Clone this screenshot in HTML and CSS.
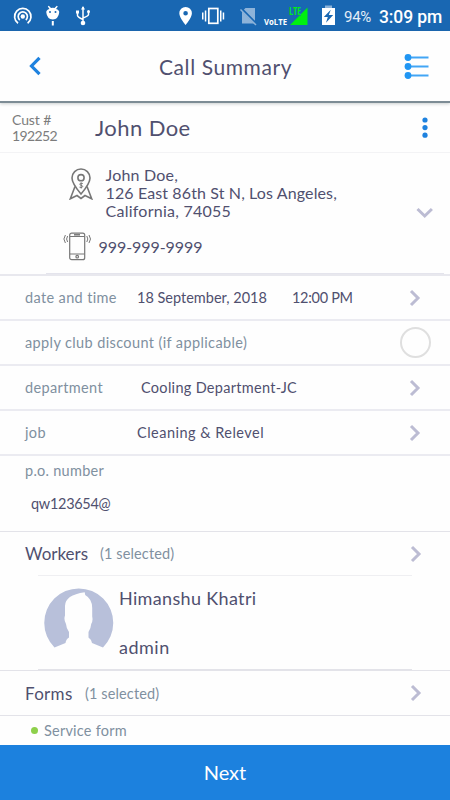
FILE: index.html
```
<!DOCTYPE html>
<html lang="en">
<head>
<meta charset="utf-8">
<title>Call Summary</title>
<link rel="stylesheet" href="styles.css">
</head>
<body>
<svg width="0" height="0" class="defs">
  <symbol id="chev" viewBox="0 0 12 18"><path d="M2 2l7 7-7 7" fill="none" stroke="#bcbcd3" stroke-width="3"/></symbol>
</svg>
<div class="screen">
  <div class="status">
    <svg class="status-icons" width="340" height="31" viewBox="0 0 340 31">
      <g fill="none" stroke="#fff" stroke-width="1.7">
        <path d="M18 23.3a8.2 8.2 0 1 1 9.6 0"/>
        <path d="M19.8 20a4.6 4.6 0 1 1 6 0"/>
        <path d="M83 7v15M77.500 12v3.500q0 1.500 5.500 4M88.500 12v2.500q0 1.500-5.500 3.500" stroke-width="1.500"/>
      </g>
      <g fill="#fff">
        <circle cx="22.800" cy="16.500" r="2.200"/>
        <path d="M46.300 12.500Q46 10 49.500 9L47.800 6.500l1-.7L51 8q1.800-.4 3.500 0L56.800 5.800l1 .7L56 9q3.500 1 3.200 3.500Q58.500 19 52.800 19.500 47 19 46.300 12.500zM51.800 21h2v4.500h-2z"/>
        <path d="M81 9.500L83 6l2 3.500zM76 10.500h3v3h-3z"/>
        <circle cx="88.500" cy="11.500" r="1.500"/><circle cx="83" cy="23" r="2.300"/>
        <path fill-rule="evenodd" d="M185.600 7a6.300 6.300 0 0 1 6.300 6.300c0 4.500-6.300 11.700-6.300 11.700s-6.300-7.200-6.300-11.700A6.300 6.300 0 0 1 185.600 7zm0 4a2.300 2.300 0 1 0 0 4.600 2.300 2.300 0 0 0 0-4.600z"/>
        <path d="M202 12.500h1.500v7H202zM204.800 10.500h1.500v11h-1.500zM220 10.500h1.500v11H220zM222.700 12.500h1.500v7h-1.500z"/>
      </g>
      <g fill="#1967b2"><circle cx="50" cy="12" r="1"/><circle cx="55.500" cy="12" r="1"/></g>
      <rect x="208.800" y="8.500" width="9" height="14.800" fill="none" stroke="#fff" stroke-width="1.700"/>
      <path d="M242 11.500L245.500 8H255v15.500H242z" fill="#8db3d9"/>
      <path d="M241 8.500L256.500 24" stroke="#1967b2" stroke-width="2.600"/>
      <path d="M240.500 9.500L256 25" stroke="#8db3d9" stroke-width="1.500"/>
      <path d="M307.500 7.500V25H290z" fill="#00f010"/>
      <path d="M325 5.500h7v3h-7z" fill="#8db3d9"/><path d="M322 8h13v17h-13z" fill="#fff"/>
      <path d="M330.800 9.800l-7 7.300h4l-1.800 5.600 7.200-7.600h-4.400z" fill="#1967b2"/>
      <path d="M289 5.500h12v10h-12z" fill="#1967b2"/>
      <text x="264" y="25" class="volte" textLength="23" lengthAdjust="spacingAndGlyphs">VoLTE</text>
      <text x="289" y="15" class="lte" textLength="12" lengthAdjust="spacingAndGlyphs">LTE</text>
    </svg>
    <span class="battery">94%</span><span class="clock">3:09 pm</span>
  </div>

  <header class="header">
    <svg class="back" width="12" height="20" viewBox="0 0 12 20"><path d="M10.500 1.800L2.500 10l8 8.200" fill="none" stroke="#1e82df" stroke-width="3.200"/></svg>
    <h1 class="title">Call Summary</h1>
    <svg class="menu" width="25" height="26" viewBox="0 0 25 26">
      <path d="M4 4.500h20.500M4 13.500h20.500M4 22.500h20.500" stroke="#42a5f5" stroke-width="2.200"/>
      <g fill="#2196f3"><circle cx="4" cy="4.500" r="3.400"/><circle cx="4" cy="13.500" r="3.400"/><circle cx="4" cy="22.500" r="3.400"/></g>
    </svg>
  </header>

  <section class="customer">
    <div class="cust-id"><span class="cust-label">Cust #</span><br><span class="cust-num">192252</span></div>
    <div class="cust-name">John Doe</div>
    <svg class="dots" width="6" height="22" viewBox="0 0 6 22" fill="#1e82df"><circle cx="3" cy="3" r="2.600"/><circle cx="3" cy="10.600" r="2.600"/><circle cx="3" cy="18.200" r="2.600"/></svg>
  </section>

  <section class="contact">
    <div class="contact-main">
      <div class="address-line">
        <svg class="pin" width="24" height="32" viewBox="0 0 24 32" fill="none" stroke="#777" stroke-width="1.600">
          <path d="M12 26Q3 15.500 3 10a9 9 0 0 1 18 0q0 5.500-9 16z"/><circle cx="12" cy="9.700" r="3.100"/>
          <path d="M6 18.500L1.300 30.800 8 27.500l4 3 4-3 6.700 3.300L18 18.500" />
          <path d="M13.800 15.500q-3-1-3 .6 0 1 1.300 1.200 1.600.3 1.600 1.300 0 1.600-3.200.6M12.200 14.500v6" stroke-width="1"/>
        </svg>
        <div class="address"><span class="a1">John Doe,</span><br><span class="a2">126 East 86th St N, Los Angeles,</span><br><span class="a3">California, 74055</span></div>
      </div>
      <div class="phone-line">
        <svg class="phone" width="28" height="29" viewBox="0 0 28 29" fill="none" stroke="#777" stroke-width="1.200">
          <rect x="6.700" y="1.200" width="15" height="26.500" rx="2"/><path d="M7 4.500h14.500M7 22h14.500"/><path d="M11 2.800h6" stroke-width="1.500"/><circle cx="14.200" cy="24.700" r="1.300"/>
          <path d="M4.600 4q-2 3 0 6M2.400 3q-3 4 0 8M23.800 4q2 3 0 6M26 3q3 4 0 8" stroke-width="1"/>
        </svg>
        <span class="tel">999-999-9999</span>
      </div>
    </div>
    <svg class="down" width="18" height="12" viewBox="0 0 18 12"><path d="M1.500 2l7.200 7 7.200-7" fill="none" stroke="#bcbcd3" stroke-width="3"/></svg>
  </section>
  <div class="contact-rule"></div>

  <div class="row first"><span class="label l-date">date and time</span><span class="value v-date">18 September, 2018</span><span class="v-time">12:00 PM</span><svg class="chev" width="12" height="18"><use href="#chev"/></svg></div>
  <div class="row"><span class="label l-club">apply club discount (if applicable)</span><span class="radio"></span></div>
  <div class="row"><span class="label l-dept">department</span><span class="value v-dept">Cooling Department-JC</span><svg class="chev" width="12" height="18"><use href="#chev"/></svg></div>
  <div class="row"><span class="label l-job">job</span><span class="value v-job">Cleaning &amp; Relevel</span><svg class="chev" width="12" height="18"><use href="#chev"/></svg></div>
  <div class="po"><div><span class="l-po">p.o. number</span></div><div class="po-value"><span class="v-po">qw123654@</span></div></div>

  <div class="group workers"><span class="g-work">Workers</span><span class="count c-work">(1 selected)</span><svg class="chev" width="12" height="18"><use href="#chev"/></svg></div>
  <div class="worker">
    <svg class="avatar" width="70" height="60" viewBox="0 0 70 60">
      <path d="M10.500 59.500A34.500 34.500 0 1 1 59 59.500L48 55Q47 51 44.500 49.500V44q2.500-4 2.700-8 2-3 1-7.500V20q0-9-7-13l-.5-2.800Q21 7 21 18v9.500q-1.500 4 1 8.500.2 4 3 8v5.500Q22 51 21.500 55z" fill="#b8c0da"/>
    </svg>
    <div class="worker-text"><span class="w-name">Himanshu Khatri</span><span class="w-role">admin</span></div>
  </div>
  <div class="group forms"><span class="g-form">Forms</span><span class="count c-form">(1 selected)</span><svg class="chev" width="12" height="18"><use href="#chev"/></svg></div>
  <div class="form-item"><span class="bullet"></span><span class="f-name">Service form</span></div>
  <div class="next"><span class="next-text">Next</span></div>
</div>
</body>
</html>
```

FILE: styles.css
```
* { box-sizing: border-box; }
body { margin: 0; background: #fefefe; font-family: Lato, "Liberation Sans", sans-serif; color: #50506f; }
svg { display: block; flex: none; }
.defs { position: absolute; }
.screen { width: 450px; height: 800px; overflow: hidden; display: flex; flex-direction: column; background: #fefefe; }
.screen > * { flex: none; }
span { white-space: nowrap; }

.status { height: 31px; background: #1967b2; display: flex; align-items: center; color: #fff; font-family: Roboto, sans-serif; }
.battery { margin-left: 4px; width: 35px; font-size: 15px; letter-spacing: -0.3px; padding-top: 2px; color: #e3edf7; }
.clock { font-size: 17.5px; font-weight: 500; padding-top: 2px; letter-spacing: -0.1px; }
.volte { font: 700 9px "Open Sans", sans-serif; fill: #fff; }
.lte { font: 700 10px "Open Sans", sans-serif; fill: #00f010; }

.header { height: 72px; display: flex; align-items: center; border-bottom: 2px solid #7d8c95; box-shadow: 0 1px 3px rgba(80, 95, 100, .3); position: relative; }
.back { margin-left: 29px; }
.title { margin: 2px 0 0 118px; width: 246px; font-size: 21px; font-weight: 400; line-height: 26px; letter-spacing: 0.58px; }
.menu { margin: 0 0 1px -1px; }

.customer { height: 50px; display: flex; align-items: center; border-bottom: 1px solid #f3f3f5; }
.cust-id { margin-left: 12px; width: 83px; font-size: 14px; line-height: 15.500px; color: #7c7c7c; }
.cust-label { letter-spacing: -0.1px; }
.cust-num { letter-spacing: -0.6px; }
.cust-name { width: 327px; font-size: 22px; line-height: 26px; letter-spacing: 0.42px; }
.dots { margin-top: 1px; }

.contact { height: 120px; display: flex; }
.contact-main { width: 416px; }
.address-line { display: flex; padding-left: 69px; height: 78px; padding-top: 13px; }
.pin { margin-top: 2px; }
.address { margin-left: 12.500px; font-size: 16px; line-height: 18px; }
.a1 { letter-spacing: 0.2px; }
.a2 { letter-spacing: 0.12px; }
.a3 { letter-spacing: 0.25px; }
.phone-line { display: flex; padding-left: 63px; }
.phone { margin-top: 1px; }
.tel { margin-left: 7.500px; font-size: 16px; line-height: 31px; letter-spacing: -0.06px; }
.down { margin-top: 54px; }
.contact-rule { height: 1px; margin: 0 6px 0 46px; background: #e4e4ec; }

.row { height: 45px; display: flex; align-items: center; border-bottom: 2px solid #ebebf1; padding-left: 25px; font-size: 14.500px; }
.first { height: 47px; border-top: 2px solid #e8e8ee; }
.label { width: 112px; color: #8090a0; letter-spacing: 0.36px; }
.value { width: 155px; }
.l-dept { width: 116px; }
.v-dept { width: 268px; letter-spacing: 0.3px; }
.v-job { width: 272px; letter-spacing: 0.48px; }
.v-time { width: 117px; letter-spacing: -0.3px; }
.l-club { width: 375px; letter-spacing: 0.38px; }
.radio { width: 31px; height: 31px; border: 2px solid #dfdfdf; border-radius: 50%; }

.po { height: 76px; padding: 6px 0 0 25px; font-size: 14.500px; line-height: 18px; border-bottom: 1px solid #e3e3e9; }
.l-po { color: #8090a0; letter-spacing: 0.27px; }
.po-value { padding: 15px 0 0 6px; }
.v-po { letter-spacing: -0.3px; }
.group { display: flex; align-items: center; padding-left: 25px; font-size: 17px; }
.workers { height: 43px; }
.count { color: #8090a0; font-size: 14.500px; letter-spacing: 0.12px; }
.g-work { width: 75px; }
.c-work { width: 310px; }
.worker { height: 95px; margin: 0 38px; border-top: 1px solid #efeff2; border-bottom: 1px solid #e3e3e9; display: flex; padding: 12px 0 0 6px; }
.worker-text { display: flex; flex-direction: column; margin: -1px 0 0 5px; font-size: 18px; line-height: 22px; }
.w-name { letter-spacing: 0.34px; }
.w-role { margin-top: 27px; letter-spacing: 0.5px; }
.forms { height: 46px; border-top: 1px solid #e3e3e9; border-bottom: 1px solid #e3e3e9; }
.g-form { width: 60px; letter-spacing: 0.3px; }
.c-form { width: 325px; }
.form-item { height: 29px; display: flex; align-items: center; padding-left: 31px; color: #8090a0; font-size: 14.500px; }
.f-name { letter-spacing: 0.22px; }
.bullet { width: 7px; height: 7px; border-radius: 50%; background: #8ed04b; margin-right: 6px; }
.next { height: 55px; padding-bottom: 1px; background: #1c81de; color: #fff; display: flex; align-items: center; justify-content: center; font-size: 20px; }
```
